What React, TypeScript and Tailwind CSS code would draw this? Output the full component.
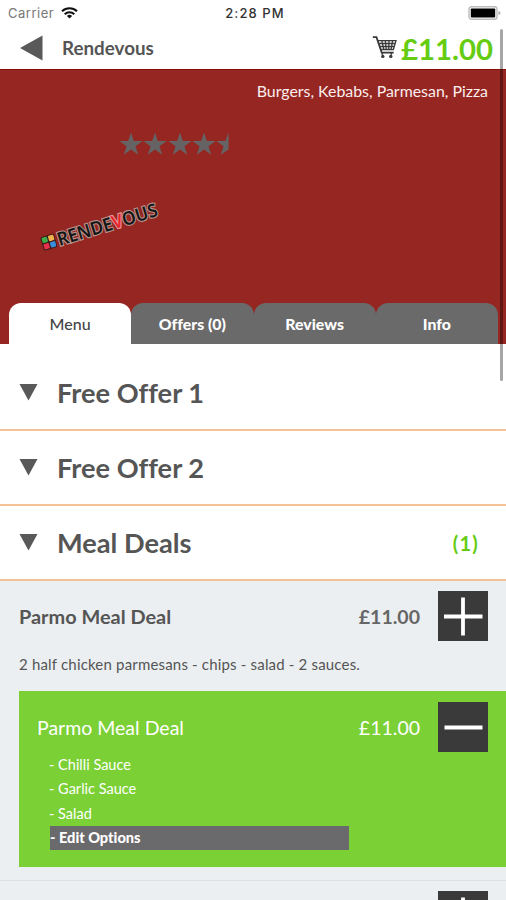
import { useState } from "react";

const tabs = ["Menu", "Offers (0)", "Reviews", "Info"];

const categories = [
  { name: "Free Offer 1", count: 0 },
  { name: "Free Offer 2", count: 0 },
  { name: "Meal Deals", count: 1 },
];

const extras = ["Chilli Sauce", "Garlic Sauce", "Salad"];

const StatusBar = () => (
  <div className="flex h-[26px] items-center justify-between pl-2 pr-[5px] font-['Inter',sans-serif] text-[13px] leading-none">
    <div className="flex flex-1 items-center gap-[7px] text-[#777]">
      <span className="tracking-[0.5px]">Carrier</span>
      <svg width="17" height="12" viewBox="0 0 17 12" fill="none" stroke="#111" strokeWidth="2">
        <path d="M1 4.2a10.8 10.8 0 0 1 15 0" />
        <path d="M3.7 7.2a6.9 6.9 0 0 1 9.6 0" />
        <path d="M8.5 11.6 5.9 9a3.7 3.7 0 0 1 5.2 0z" fill="#111" stroke="none" />
      </svg>
    </div>
    <span className="pl-px font-medium tracking-[1.1px] text-[#333]">2:28 PM</span>
    <div className="flex flex-1 justify-end">
      <svg width="33" height="14" viewBox="0 0 33 14">
        <rect x="1" y="0.8" width="28" height="12.4" rx="2.5" fill="#fff" stroke="#bbb" strokeWidth="1.4" />
        <rect x="2.8" y="2.5" width="24.4" height="9" rx="0.8" fill="#000" />
        <path d="M30.5 5v4q2-.6 2-2t-2-2" fill="#aaa" />
      </svg>
    </div>
  </div>
);

const CartIcon = () => (
  <svg width="25" height="23" viewBox="0 0 25 23" fill="none" stroke="#3a3a3a" strokeWidth="1.3">
    <path d="M0.8 1.2h3.7l5.2 15.5h12" strokeWidth="1.8" />
    <path d="M5.6 4.6h18.4l-2.6 8.9H8.6M6.3 7.5h16.9M7.3 10.5h15M9.8 4.6l2 8.9M13.3 4.6l1 8.9M17 4.6l-.3 8.9M20.6 4.6l-1.5 8.9" />
    <path d="M10.3 16.7v2M19.3 16.7v2" strokeWidth="1.6" />
    <circle cx="10.8" cy="20.4" r="1.7" fill="#3a3a3a" stroke="none" />
    <circle cx="18.8" cy="20.4" r="1.7" fill="#3a3a3a" stroke="none" />
  </svg>
);

const Stars = () => (
  <div className="ml-[119px] mt-[29px] flex gap-[0.3px]">
    {[0, 1, 2, 3].map((i) => (
      <svg key={i} width="24" height="24" viewBox="0 0 24 24" fill="#666364">
        <path d="M12 0.5l2.8 8.4h8.9l-7.2 5.3 2.7 8.6-7.2-5.3-7.2 5.3 2.7-8.6-7.2-5.3h8.9z" />
      </svg>
    ))}
    <svg width="13" height="24" viewBox="0 0 13 24" fill="#666364">
      <path d="M12.6 0.5v17l-7.8 5.3 2.7-8.6-7.2-5.3h8.9z" />
    </svg>
  </div>
);

const Logo = () => (
  <svg className="ml-9 mt-[38px]" width="130" height="60" viewBox="36 196 130 60">
    <g transform="rotate(-17 49 243)">
      <rect x="41.5" y="237" width="14" height="14" rx="1.5" fill="#3a1a1a" />
      <rect x="42.5" y="238" width="5.5" height="5.5" rx="1" fill="#3fae49" />
      <rect x="49.2" y="238" width="5.5" height="5.5" rx="1" fill="#f3b34c" />
      <rect x="42.5" y="244.6" width="5.5" height="5.5" rx="1" fill="#e8324c" />
      <rect x="49.2" y="244.6" width="5.5" height="5.5" rx="1" fill="#3a8ee0" />
      <text
        x="57.5"
        y="250.8"
        textLength="104"
        lengthAdjust="spacingAndGlyphs"
        fontFamily="'Noto Sans', sans-serif"
        fontSize="18.5"
        fontWeight="600"
        fill="#151515"
        stroke="#b9958f"
        strokeWidth="2.2"
        paintOrder="stroke"
      >
        RENDE<tspan fill="#e8202c" stroke="#e79a9a">V</tspan>OUS
      </text>
    </g>
  </svg>
);

const QuantityButton = ({ type }: { type: "add" | "remove" }) => (
  <button aria-label={type} className="h-[50px] w-[50px] shrink-0 bg-[#3a3a3a]">
    <svg width="50" height="50" viewBox="0 0 50 50" stroke="#fff" strokeWidth="3.8">
      <path d={type === "add" ? "M6 25.5h38.5M25 6.5v38" : "M6.5 25.5h38"} />
    </svg>
  </button>
);

const App = () => {
  const [activeTab, setActiveTab] = useState("Menu");

  return (
    <div className="relative h-[900px] w-[506px] overflow-hidden whitespace-nowrap bg-white font-['Lato',sans-serif] text-[#555] [font-variant-ligatures:none]">
      <StatusBar />

      {/* Restaurant name and basket total */}
      <header className="flex h-[43px] items-center pl-5 pr-[13px]">
        <svg width="23" height="26" viewBox="0 0 23 26" fill="#595959">
          <path d="M0 13 22.5 .5v25z" />
        </svg>
        <h1 className="ml-[19px] flex-1 pt-0.5 text-[18.8px] font-bold">Rendevous</h1>
        <CartIcon />
        <span className="ml-1 pt-0.5 text-[29.3px] font-bold leading-none text-[#6c1]">£11.00</span>
      </header>

      {/* Banner */}
      <section className="flex h-[275px] flex-col border-t border-[#8a0f0a] bg-[#962621]">
        <p className="mr-[18px] mt-[9px] text-right text-[15.9px] leading-6 text-[#fbeeee]">
          Burgers, Kebabs, Parmesan, Pizza
        </p>
        <Stars />
        <Logo />
        <nav className="ml-[9px] mr-2 mt-auto grid h-[41px] grid-cols-4">
          {tabs.map((tab) => (
            <button
              key={tab}
              onClick={() => setActiveTab(tab)}
              className={
                tab === activeTab
                  ? "rounded-t-xl bg-white text-[16px] font-medium text-[#444]"
                  : "rounded-t-xl bg-[#6a6a6a] text-[15.8px] font-black text-white"
              }
            >
              {tab}
            </button>
          ))}
        </nav>
      </section>

      {/* Categories */}
      <ul className="pt-3">
        {categories.map((category) => (
          <li
            key={category.name}
            className="flex h-[75px] items-center border-b-2 border-[#f5c196] pl-[19px] pr-[27px]"
          >
            <svg className="-mt-px" width="19" height="17" viewBox="0 0 19 17" fill="#595959">
              <path d="M0.5 0h18L9.5 16.5z" />
            </svg>
            <h2 className="ml-[19px] flex-1 pt-px text-[27.2px] font-bold">{category.name}</h2>
            {category.count > 0 && (
              <span className="text-[20px] font-bold tracking-[1.2px] text-[#6c1]">({category.count})</span>
            )}
          </li>
        ))}
      </ul>

      {/* Items */}
      <section className="h-[319px] bg-[#ebeff1] pt-[10px]">
        <div className="flex items-center pl-[19px] pr-[18px]">
          <h3 className="flex-1 pt-px text-[19.9px] font-bold">Parmo Meal Deal</h3>
          <span className="mr-[18px] pt-px text-[19.5px] font-bold text-[#666]">£11.00</span>
          <QuantityButton type="add" />
        </div>
        <p className="ml-[19px] mt-[11px] text-[15px] leading-6 tracking-[0.18px] text-[#555]">
          2 half chicken parmesans - chips - salad - 2 sauces.
        </p>

        <div className="ml-[19px] mt-[15px] h-[176px] bg-[#7bd036] pt-[11px] text-white">
          <div className="flex items-center pl-[18px] pr-[18px]">
            <h3 className="flex-1 pt-[2px] text-[19.5px]">Parmo Meal Deal</h3>
            <span className="mr-[18px] pt-[2px] text-[19.5px]">£11.00</span>
            <QuantityButton type="remove" />
          </div>
          <ul className="ml-[31px] w-[299px] pt-px text-[14.5px] leading-[24.3px]">
            {extras.map((extra) => (
              <li key={extra} className="-indent-px">- {extra}</li>
            ))}
            <li className="bg-[#6a696c] text-[14.6px] font-black">- Edit Options</li>
          </ul>
        </div>

        <div className="mt-[13px] flex justify-end border-t border-[#dde1e3] pr-[18px] pt-[10px]">
          <QuantityButton type="add" />
        </div>
      </section>

      {/* Scroll indicator */}
      <div className="absolute right-[3px] top-[29px] h-[352px] w-[3px] rounded-full bg-black/35" />
    </div>
  );
};

export default App;
